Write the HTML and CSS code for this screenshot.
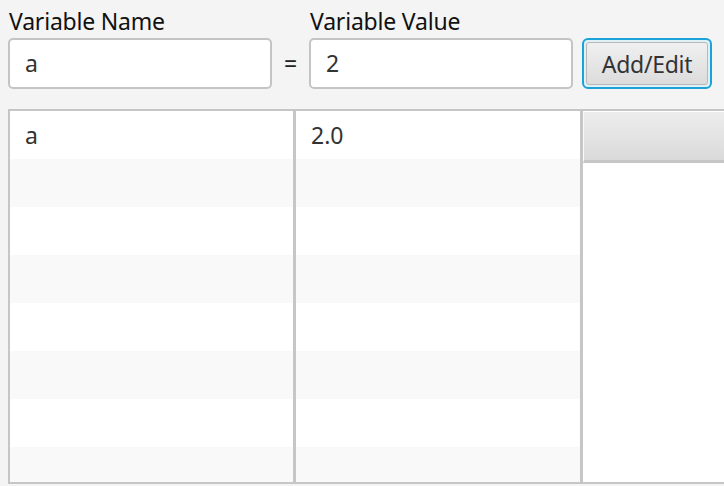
FILE: index.html
```html
<!DOCTYPE html>
<html>
<head>
<meta charset="utf-8">
<link rel="stylesheet" href="styles.css">
</head>
<body>
<div class="form">
  <div class="group">
    <label class="lbl">Variable Name</label>
    <div class="field">a</div>
  </div>
  <div class="eq">=</div>
  <div class="group">
    <label class="lbl">Variable Value</label>
    <div class="field">2</div>
  </div>
  <button class="btn"><span class="btn-inner">Add/Edit</span></button>
</div>
<div class="table">
  <div class="col col-a">
    <div class="cell">a</div>
    <div class="cell odd"></div>
    <div class="cell"></div>
    <div class="cell odd"></div>
    <div class="cell"></div>
    <div class="cell odd"></div>
    <div class="cell"></div>
    <div class="cell odd"></div>
  </div>
  <div class="col col-b">
    <div class="cell">2.0</div>
    <div class="cell odd"></div>
    <div class="cell"></div>
    <div class="cell odd"></div>
    <div class="cell"></div>
    <div class="cell odd"></div>
    <div class="cell"></div>
    <div class="cell odd"></div>
  </div>
  <div class="filler">
    <div class="filler-head"></div>
    <div class="filler-body"></div>
  </div>
</div>
</body>
</html>
```
FILE: styles.css
```css
html, body {
  margin: 0;
  padding: 0;
  background: #f4f4f4;
  overflow: hidden;
  width: 724px;
  height: 486px;
}
body {
  font-family: "Noto Sans", "Open Sans", sans-serif;
  font-size: 23px;
}
.form {
  display: flex;
  align-items: flex-end;
  padding: 7px 0 0 8px;
}
.group {
  display: flex;
  flex-direction: column;
}
.lbl {
  display: block;
  color: #111;
  line-height: 28px;
  height: 28px;
  margin-bottom: 3px;
  padding-left: 1px;
  letter-spacing: -0.2px;
}
.field {
  box-sizing: border-box;
  width: 264px;
  height: 51px;
  background: #fff;
  border: 2px solid #c4c4c4;
  border-radius: 5px;
  color: #333;
  padding: 0 15px;
  line-height: 46px;
}
.eq {
  width: 37px;
  height: 51px;
  line-height: 51px;
  text-align: center;
  color: #222;
}
.btn {
  box-sizing: border-box;
  margin-left: 9px;
  width: 130px;
  height: 51px;
  padding: 2px;
  border: 2px solid #1ba2d8;
  border-radius: 6px;
  background: #dff0f7;
  font-family: inherit;
  font-size: 23px;
  color: #333;
  display: flex;
}
.btn-inner {
  flex: 1;
  display: flex;
  align-items: center;
  justify-content: center;
  border: 1px solid #b8b8b8;
  border-radius: 3px;
  background: linear-gradient(#f0f0f0, #dcdcdc);
  letter-spacing: -0.3px;
}
.table {
  margin: 20px 0 0 8px;
  box-sizing: border-box;
  width: 740px;
  height: 375px;
  border: 2px solid #c6c6c6;
  display: flex;
  overflow: hidden;
  background: #fff;
}
.col {
  box-sizing: border-box;
  display: flex;
  flex-direction: column;
  border-right: 3px solid #c6c6c6;
}
.col-a { width: 286px; }
.col-b { width: 287px; }
.cell {
  flex: 0 0 48px;
  height: 48px;
  line-height: 48px;
  padding-left: 15px;
  color: #333;
  background: #fff;
}
.cell.odd { background: #f9f9f9; }
.filler {
  flex: 1;
  display: flex;
  flex-direction: column;
}
.filler-head {
  box-sizing: border-box;
  height: 52px;
  border-bottom: 3px solid #c6c6c6;
  border-top: 1px solid #fff;
  border-left: 1px solid #fafafa;
  background: linear-gradient(#ededed, #dadada);
}
.filler-body {
  flex: 1;
  background: #fff;
}
```
